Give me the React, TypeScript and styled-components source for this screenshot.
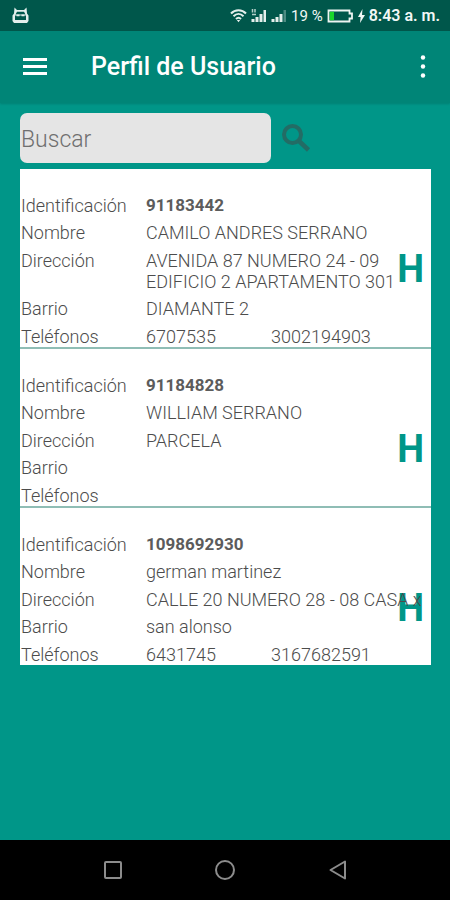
import React from "react";
import styled, { createGlobalStyle } from "styled-components";

const GlobalStyle = createGlobalStyle`
  *, *::before, *::after { box-sizing: border-box; }
  body {
    margin: 0;
    background: #009688;
    font-family: Roboto, "Liberation Sans", sans-serif;
  }
`;

const Screen = styled.div`
  display: flex;
  flex-direction: column;
  min-height: 100vh;
  background: #009688;
`;

const StatusBar = styled.div`
  display: flex;
  align-items: center;
  justify-content: space-between;
  height: 31px;
  padding: 0 10px 0 12px;
  background: #00574b;
  color: #f2f8f6;
  font-size: 16px;
  line-height: 20px;
`;

const StatusGroup = styled.div`
  display: flex;
  align-items: center;
  gap: 4px;
`;

const Battery = styled.span`
  font-size: 15px;
`;

const Clock = styled.time`
  font-weight: 600;
`;

const AppBar = styled.header`
  display: flex;
  align-items: center;
  height: 72px;
  padding: 0 12px 0 20px;
  background: #008577;
  box-shadow: 0 1px 2px rgba(0, 0, 0, 0.15);
`;

const IconButton = styled.button`
  display: flex;
  align-items: center;
  justify-content: center;
  width: 30px;
  height: 40px;
  padding: 0;
  border: 0;
  background: none;
  color: #ffffff;
  cursor: pointer;
`;

const Title = styled.h1`
  flex: 1;
  margin: 0;
  padding-left: 41px;
  color: #ffffff;
  font-size: 25px;
  font-weight: 500;
  line-height: 32px;
`;

const Content = styled.main`
  flex: 1;
  padding: 10px 19px 20px 20px;
`;

const SearchForm = styled.form`
  display: flex;
  align-items: center;
  gap: 10px;
  margin-bottom: 6px;
`;

const SearchInput = styled.input`
  width: 61%;
  height: 50px;
  padding: 2px 1px 0;
  border: 0;
  border-radius: 7px;
  background: #e5e5e5;
  color: #444444;
  font-family: inherit;
  font-size: 23px;
  font-weight: 300;
  &::placeholder { color: #6f6f6f; opacity: 1; }
`;

const UserList = styled.ul`
  margin: 0;
  padding: 0;
  list-style: none;
  background: #ffffff;
`;

const UserCard = styled.li`
  position: relative;
  padding-top: 19px;
  &:not(:last-child) { border-bottom: 2px solid #8fbdb5; }
`;

const Fields = styled.dl`
  position: relative;
  z-index: 1;
  margin: 0;
  padding-left: 1px;
  color: #4c4c4c;
  font-size: 18px;
  font-weight: 300;
  line-height: 21px;
  pointer-events: none;
`;

const Field = styled.div`
  display: grid;
  grid-template-columns: 125px 125px 1fr;
  padding-top: 7px;
  &:nth-child(even) { padding-top: 6px; }
`;

const Label = styled.dt``;

const Value = styled.dd<{ $strong?: boolean; $wide?: boolean }>`
  margin: 0;
  grid-column: ${(p) => (p.$wide ? "2 / 4" : "auto")};
  color: ${(p) => (p.$strong ? "#5c5c5c" : "inherit")};
  font-size: ${(p) => (p.$strong ? "17px" : "inherit")};
  font-weight: ${(p) => (p.$strong ? 700 : 300)};
`;

const HistoryButton = styled.button`
  position: absolute;
  right: 7px;
  top: 78px;
  padding: 0;
  border: 0;
  background: none;
  color: #009688;
  font-family: inherit;
  font-size: 38px;
  font-weight: 700;
  line-height: 44px;
  cursor: pointer;
`;

const NavBar = styled.nav`
  display: flex;
  align-items: center;
  justify-content: space-evenly;
  height: 60px;
  padding: 0 24px;
  background: #000000;
`;

const NavButton = styled(IconButton)`
  width: 48px;
  color: #8c8c8c;
`;

interface User {
  id: string;
  name: string;
  address: string;
  district: string;
  phones: string[];
}

const users: User[] = [
  {
    id: "91183442",
    name: "CAMILO ANDRES SERRANO",
    address: "AVENIDA 87 NUMERO 24 - 09 EDIFICIO 2 APARTAMENTO 301",
    district: "DIAMANTE 2",
    phones: ["6707535", "3002194903"],
  },
  { id: "91184828", name: "WILLIAM SERRANO", address: "PARCELA", district: "", phones: [] },
  {
    id: "1098692930",
    name: "german martinez",
    address: "CALLE 20 NUMERO 28 - 08 CASA x",
    district: "san alonso",
    phones: ["6431745", "3167682591"],
  },
];

const RobotIcon = () => (
  <svg width="17" height="17" viewBox="0 0 17 17" fill="#e4efec" aria-hidden="true">
    <path d="M2.500 0.500 5 3h7l2.500-2.500 0.500 6 1.500 2V14l-1.500 2h-13L0.500 14V8.500L2 6.500z" />
    <path d="M5 4.800h7l1.500 2.700h-10zM3 8.500h11v4.500H3z" fill="#00574b" />
    <path d="M4.500 7.500h3v1.800h-3zM9.500 7.500h3v1.800h-3z" />
  </svg>
);

const WifiIcon = () => (
  <svg width="17" height="15" viewBox="0 0 17 15" fill="none" stroke="#e4efec" strokeWidth="2" aria-hidden="true">
    <path d="M1 5.500C5 1 12 1 16 5.500M3.500 8.300c3-3 7-3 10 0M6 11c1.500-1.500 3.500-1.500 5 0" />
    <path d="M6.800 12h3.400L8.500 14.200z" fill="#e4efec" stroke="none" />
  </svg>
);

const SignalIcon = ({ tagged }: { tagged?: boolean }) => (
  <svg width="16" height="15" viewBox="0 0 16 15" aria-hidden="true">
    <path d="M0.500 11h3v3h-3zM4.500 9h3v5h-3zM8.500 6h3v8h-3z" fill="#e4efec" />
    <path d="M12.500 2H15v12h-2.500z" fill={tagged ? "#e4efec" : "#4d8b82"} />
    {tagged && <path d="M1.500 1v3.500M4 1v3.500M1 6.500h4" stroke="#b4d0ca" strokeWidth="1.500" />}
  </svg>
);

const BatteryIcon = () => (
  <svg width="27" height="14" viewBox="0 0 27 14" aria-hidden="true">
    <path d="M1.500 1.500h21v3h2.500v5h-2.500v3h-21z" fill="none" stroke="#eef5f3" strokeWidth="1.800" />
    <path d="M2.800 2.800H7v8.400H2.800z" fill="#19d62b" />
  </svg>
);

const BoltIcon = () => (
  <svg width="7" height="14" viewBox="0 0 7 14" aria-hidden="true">
    <path d="M4.500 0 0 8h2.600L2 14l5-8H4z" fill="#f2f8f6" />
  </svg>
);

export default function App() {
  return (
    <Screen>
      <GlobalStyle />
      <StatusBar>
        <RobotIcon />
        <StatusGroup>
          <WifiIcon />
          <SignalIcon tagged />
          <SignalIcon />
          <Battery>19 %</Battery>
          <BatteryIcon />
          <BoltIcon />
          <Clock>8:43 a. m.</Clock>
        </StatusGroup>
      </StatusBar>
      <AppBar>
        <IconButton aria-label="Abrir menú">
          <svg width="26" height="18" viewBox="0 0 26 18" fill="#ffffff" aria-hidden="true">
            <path d="M1 0h24v3H1zM1 7h24v3H1zM1 14h24v3H1z" />
          </svg>
        </IconButton>
        <Title>Perfil de Usuario</Title>
        <IconButton aria-label="Más opciones">
          <svg width="6" height="24" viewBox="0 0 6 24" fill="#ffffff" aria-hidden="true">
            <circle cx="3" cy="2.500" r="2.200" />
            <circle cx="3" cy="11.500" r="2.200" />
            <circle cx="3" cy="20.500" r="2.200" />
          </svg>
        </IconButton>
      </AppBar>
      <Content>
        <SearchForm role="search" onSubmit={(e) => e.preventDefault()}>
          <SearchInput aria-label="Buscar" placeholder="Buscar" />
          <IconButton type="submit" aria-label="Buscar usuario">
            <svg width="30" height="30" viewBox="0 0 30 30" fill="none" stroke="#236c65" aria-hidden="true">
              <circle cx="11.500" cy="11.500" r="8.500" strokeWidth="4" />
              <path d="M18 18l9.500 9" strokeWidth="4.500" />
            </svg>
          </IconButton>
        </SearchForm>
        <UserList>
          {users.map((user) => (
            <UserCard key={user.id}>
              <Fields>
                <Field>
                  <Label>Identificación</Label>
                  <Value $wide $strong>{user.id}</Value>
                </Field>
                <Field>
                  <Label>Nombre</Label>
                  <Value $wide>{user.name}</Value>
                </Field>
                <Field>
                  <Label>Dirección</Label>
                  <Value $wide>{user.address}</Value>
                </Field>
                <Field>
                  <Label>Barrio</Label>
                  <Value $wide>{user.district}</Value>
                </Field>
                <Field>
                  <Label>Teléfonos</Label>
                  {user.phones.map((phone) => (
                    <Value key={phone}>{phone}</Value>
                  ))}
                </Field>
              </Fields>
              <HistoryButton aria-label={`H ${user.name}`}>H</HistoryButton>
            </UserCard>
          ))}
        </UserList>
      </Content>
      <NavBar aria-label="Sistema">
        <NavButton aria-label="Recientes">
          <svg width="20" height="20" viewBox="0 0 20 20" fill="none" stroke="currentColor" strokeWidth="2" aria-hidden="true">
            <rect x="2" y="2" width="16" height="16" rx="1" />
          </svg>
        </NavButton>
        <NavButton aria-label="Inicio">
          <svg width="22" height="22" viewBox="0 0 22 22" fill="none" stroke="currentColor" strokeWidth="2" aria-hidden="true">
            <circle cx="11" cy="11" r="9" />
          </svg>
        </NavButton>
        <NavButton aria-label="Atrás">
          <svg width="20" height="20" viewBox="0 0 20 20" fill="none" stroke="currentColor" strokeWidth="2" strokeLinejoin="round" aria-hidden="true">
            <path d="M17 1.500v17L2.500 10z" />
          </svg>
        </NavButton>
      </NavBar>
    </Screen>
  );
}
